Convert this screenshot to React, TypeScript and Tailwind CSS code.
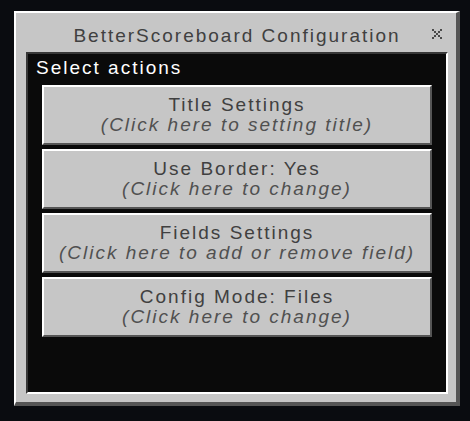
const actions = [
  { title: "Title Settings", hint: "(Click here to setting title)" },
  { title: "Use Border: Yes", hint: "(Click here to change)" },
  { title: "Fields Settings", hint: "(Click here to add or remove field)" },
  { title: "Config Mode: Files", hint: "(Click here to change)" },
];

function CloseIcon() {
  // pixel style x, 5x5 grid at scale 2
  const cells = [
    [0, 0], [4, 0], [1, 1], [3, 1], [2, 2], [1, 3], [3, 3], [0, 4], [4, 4],
  ];
  return (
    <svg width="10" height="10" viewBox="0 0 5 5" shapeRendering="crispEdges">
      {cells.map(([x, y]) => (
        <rect key={`${x}-${y}`} x={x} y={y} width="1" height="1" fill="#4a4a4a" />
      ))}
    </svg>
  );
}

function ActionButton({ title, hint }: { title: string; hint: string }) {
  return (
    <button
      type="button"
      className="h-[60px] w-full flex flex-col items-center justify-center border-2 border-t-white border-l-white border-r-[#555555] border-b-[#555555] bg-[#c6c6c6] cursor-pointer"
    >
      <span className="text-[19px] leading-[20px] tracking-[2px] text-[#404040]">
        {title}
      </span>
      <span className="text-[19px] leading-[20px] tracking-[2px] italic text-[#505050]">
        {hint}
      </span>
    </button>
  );
}

export default function App() {
  return (
    <div className="w-[470px] h-[421px] bg-[#0a0c10] pt-[11px] pl-[14px] font-['Liberation_Sans',Arial,sans-serif]">
      <div className="w-[446px] h-[395px] flex flex-col bg-[#c6c6c6] border-t-2 border-l-2 border-t-white border-l-white border-r-4 border-b-4 border-r-[#555555] border-b-[#555555] pl-[10px] pr-[8px] pb-[8px]">
        <div className="relative h-[39px] flex justify-center pt-[13px]">
          <h1 className="text-[19px] leading-[20px] tracking-[2px] text-[#404040]">
            BetterScoreboard Configuration
          </h1>
          <button type="button" className="absolute right-[6px] top-[16px]">
            <CloseIcon />
          </button>
        </div>

        <div className="h-[342px] flex flex-col border-2 border-t-[#373737] border-l-[#373737] border-r-white border-b-white bg-[#0a0a0a]">
          <p className="pl-2 pt-[4px] text-[19px] leading-[20px] tracking-[2px] text-white">
            Select actions
          </p>
          <div className="mt-[7px] px-[14px] flex flex-col gap-1">
            {actions.map((a) => (
              <ActionButton key={a.title} title={a.title} hint={a.hint} />
            ))}
          </div>
        </div>
      </div>
    </div>
  );
}
